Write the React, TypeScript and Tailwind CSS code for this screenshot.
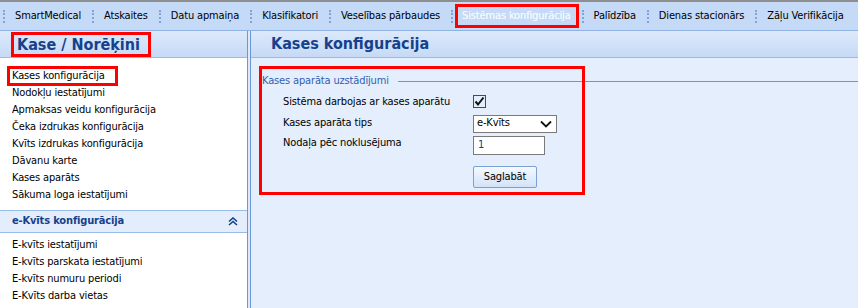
import React from "react";

const FONT = { fontFamily: '"DejaVu Sans Condensed", "Liberation Sans", sans-serif' };

function Sep() {
  return <div className="shrink-0 h-[13px] w-0 border-l-2 border-dotted border-[#7da4dc]" />;
}

const menu = [
  "SmartMedical",
  "Atskaites",
  "Datu apmaiņa",
  "Klasifikatori",
  "Veselības pārbaudes",
  "Sistēmas konfigurācija",
  "Palīdzība",
  "Dienas stacionārs",
  "Zāļu Verifikācija",
];

const items1 = [
  "Kases konfigurācija",
  "Nodokļu iestatījumi",
  "Apmaksas veidu konfigurācija",
  "Čeka izdrukas konfigurācija",
  "Kvīts izdrukas konfigurācija",
  "Dāvanu karte",
  "Kases aparāts",
  "Sākuma loga iestatījumi",
];

const items2 = [
  "E-kvīts iestatījumi",
  "E-kvīts parskata iestatījumi",
  "E-kvīts numuru periodi",
  "E-Kvīts darba vietas",
];

export default function App() {
  return (
    <div className="w-[858px] h-[308px] overflow-hidden flex flex-col bg-white text-[11px] tracking-[-0.15px] text-black" style={FONT}>
      {/* top menu */}
      <div className="h-[31px] shrink-0 border-t-2 border-[#8e8e8e] border-b border-b-[#8fb2e3] bg-[#c5daf7] flex items-center pl-[3px] whitespace-nowrap">
        {menu.map((m, i) => (
          <React.Fragment key={m}>
            <Sep />
            {i === 5 ? (
              <div className="shrink-0 ml-[2px] mr-[3px] border-[3px] border-[#ff0000] h-[24px] pl-[4px] pr-[5px] flex items-center text-[#f4f8fe] [text-shadow:0_0_0.4px_#f4f8fe]">
                {m}
              </div>
            ) : (
              <div className="shrink-0 pl-[10px] pr-[11px]">{m}</div>
            )}
          </React.Fragment>
        ))}
      </div>

      {/* body */}
      <div className="flex flex-1 min-h-0">
        {/* sidebar */}
        <div className="w-[248px] shrink-0 border-r border-[#6b97d6] flex flex-col">
          <div className="h-[27px] shrink-0 bg-gradient-to-b from-[#dde9fb] to-[#c6daf6] border-b border-[#99bbe8] flex items-end pl-[11px]">
            <div className="border-[3px] border-[#ff0000] h-[25px] pl-[3px] pr-[8px] flex items-center text-[16px] tracking-normal font-bold text-[#15428b]">
              Kase / Norēķini
            </div>
          </div>
          <div className="pt-[8px] flex flex-col">
            {items1.map((t, i) =>
              i === 0 ? (
                <div key={t} className="h-[20px] ml-[7px] w-[111px] border-[3px] border-[#ff0000] flex items-center pl-[2px] mb-[-1px]">
                  {t}
                </div>
              ) : (
                <div key={t} className="h-[17px] pl-[12px] flex items-center">
                  {t}
                </div>
              )
            )}
          </div>
          <div className="mt-[6px] h-[23px] border-t border-b border-[#99bbe8] bg-[#e4edfc] flex items-center justify-between pl-[12px] pr-[9px]">
            <span className="font-bold text-[#15428b]">e-Kvīts konfigurācija</span>
            <svg width="10" height="9" viewBox="0 0 10 9">
              <path d="M1 4.5 L5 1 L9 4.5 M1 8 L5 4.5 L9 8" stroke="#15428b" strokeWidth="1.6" fill="none" />
            </svg>
          </div>
          <div className="pt-[4px] flex flex-col">
            {items2.map((t) => (
              <div key={t} className="h-[17px] pl-[12px] flex items-center">
                {t}
              </div>
            ))}
          </div>
        </div>
        <div className="w-[2px] shrink-0 bg-[#dfe8f6]" />
        {/* content */}
        <div className="flex-1 border-l border-[#6b97d6] bg-[#e5eefc] flex flex-col">
          <div className="h-[27px] shrink-0 bg-gradient-to-b from-[#dde9fb] to-[#c6daf6] border-b border-[#99bbe8] flex items-center pl-[20px] text-[16px] tracking-normal font-bold text-[#15428b]">
            Kases konfigurācija
          </div>
          <div className="relative pt-[9px] pl-[11px]">
            <div className="flex items-center h-[28px]">
              <span className="text-[#2d5fb4] pr-[9px]">Kases aparāta uzstādījumi</span>
              <div className="flex-1 h-[1px] bg-[#6b97d6]" />
            </div>
            <div className="pl-[21px] flex flex-col -mt-[3px]">
              <div className="flex items-center h-[21px]">
                <span className="w-[190px]">Sistēma darbojas ar kases aparātu</span>
                <div className="w-[13px] h-[13px] -mt-[2px] border border-[#4a4a4a] bg-[#e5eefc] flex items-center justify-center">
                  <svg width="11" height="11" viewBox="0 0 11 11">
                    <path d="M1.5 5.5 L4 8.5 L9.5 1.5" stroke="#111" strokeWidth="2" fill="none" />
                  </svg>
                </div>
              </div>
              <div className="flex items-center h-[21px]">
                <span className="w-[190px]">Kases aparāta tips</span>
                <div className="w-[84px] h-[18px] border border-[#7a7a7a] bg-white flex items-center justify-between pl-[3px] pr-[4px]">
                  <span>e-Kvīts</span>
                  <svg width="12" height="8" viewBox="0 0 12 8">
                    <path d="M1 1.5 L6 6.5 L11 1.5" stroke="#111" strokeWidth="1.8" fill="none" />
                  </svg>
                </div>
              </div>
              <div className="flex items-start h-[32px] pt-[2px]">
                <span className="w-[190px] leading-[14px]">Nodaļa pēc noklusējuma</span>
                <div className="w-[72px] h-[19px] border border-[#7a7a7a] bg-white flex items-center pl-[4px] text-[#15428b]">
                  1
                </div>
              </div>
              <div className="flex">
                <div className="w-[190px]" />
                <div className="w-[64px] h-[22px] border border-[#7ba0d6] bg-gradient-to-b from-[#f5f9ff] to-[#d3e3f7] flex items-center justify-center rounded-[2px]">
                  Saglabāt
                </div>
              </div>
            </div>
            <div className="pointer-events-none absolute left-[8px] top-[8px] w-[326px] h-[129px] border-[3px] border-[#ff0000]" />
          </div>
        </div>
      </div>
    </div>
  );
}
